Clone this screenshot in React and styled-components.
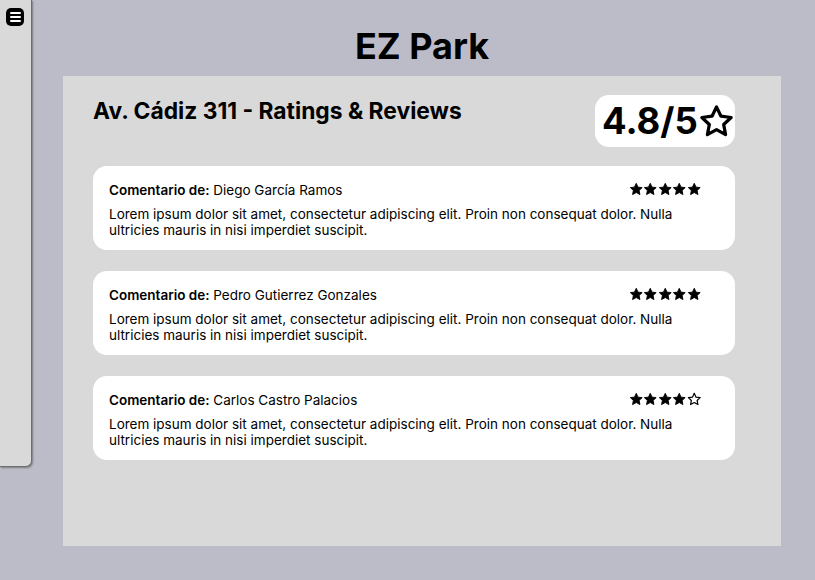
import React from "react";
import styled, { createGlobalStyle } from "styled-components";

const Global = createGlobalStyle`
  html, body { margin: 0; padding: 0; }
  body {
    background: #bcbcc8;
    font-family: Inter, "Noto Sans", sans-serif;
    color: #000;
  }
`;

const Page = styled.div`
  display: flex;
  width: 815px;
  height: 580px;
  overflow: hidden;
`;

const Sidebar = styled.aside`
  flex: 0 0 32px;
  height: 467px;
  background: #d9d9d9;
  border-right: 1px solid #6e6e6e;
  border-bottom: 1px solid #6e6e6e;
  border-bottom-right-radius: 6px;
  box-shadow: 1px 1px 2px rgba(0, 0, 0, 0.35);
  box-sizing: border-box;
  padding: 8px 0 0 6px;
`;

const MenuButton = styled.div`
  width: 18px;
  height: 18px;
  border-radius: 5px;
  background: #000;
  display: flex;
  flex-direction: column;
  align-items: center;
  justify-content: center;
  gap: 2px;
`;

const MenuLine = styled.span`
  display: block;
  width: 11px;
  height: 2px;
  border-radius: 1px;
  background: #fff;
`;

const Main = styled.main`
  flex: 1;
  display: flex;
  flex-direction: column;
  padding: 0 34px 0 31px;
`;

const Title = styled.h1`
  margin: 24px 0 8px;
  text-align: center;
  font-size: 36px;
  font-weight: 700;
  line-height: 44px;
`;

const Panel = styled.section`
  height: 470px;
  background: #d9d9d9;
  box-sizing: border-box;
  padding: 19px 46px 0 30px;
  display: flex;
  flex-direction: column;
`;

const Header = styled.div`
  display: flex;
  justify-content: space-between;
  align-items: flex-start;
`;

const Heading = styled.h2`
  margin: 2px 0 0;
  font-size: 22.8px;
  font-weight: 700;
  line-height: 28px;
`;

const RatingBox = styled.div`
  width: 140px;
  height: 52px;
  box-sizing: border-box;
  background: #fff;
  border-radius: 14px;
  display: flex;
  align-items: center;
  padding: 0 3px 0 7px;
  font-size: 36.5px;
  font-weight: 700;
  line-height: 1;
  svg { flex-shrink: 0; }
`;

const Cards = styled.div`
  margin-top: 19px;
  display: flex;
  flex-direction: column;
  gap: 21px;
`;

const Card = styled.article`
  background: #fff;
  border-radius: 14px;
  padding: 16px 16px 12px;
  font-size: 13.5px;
  line-height: 16px;
`;

const CardHead = styled.div`
  display: flex;
  justify-content: space-between;
  align-items: center;
  padding-right: 18px;
  margin-bottom: 8px;
`;

const Author = styled.div`
  font-weight: 400;
  b { font-weight: 600; }
`;

const Stars = styled.div`
  display: flex;
  gap: 0;
  margin-top: -1px;
`;

const Body = styled.p`
  margin: 0;
`;

const StarIcon = ({ filled, size = 14.5 }) => (
  <svg width={size} height={size} viewBox="0 0 24 24">
    <path
      d="M12 2.2l2.95 6.3 6.85.8-5.05 4.72 1.33 6.78L12 17.4l-6.08 3.4 1.33-6.78L2.2 9.3l6.85-.8z"
      fill={filled ? "#000" : "#fff"}
      stroke="#000"
      strokeWidth={filled ? 1.5 : 2}
      strokeLinejoin="round"
    />
  </svg>
);

const BigStar = () => (
  <svg width="37" height="37" viewBox="0 0 24 24">
    <path
      d="M12 2.5l2.9 6.05 6.6.85-4.85 4.55 1.25 6.55L12 17.3l-5.9 3.2 1.25-6.55L2.5 9.4l6.6-.85z"
      fill="none"
      stroke="#000"
      strokeWidth="2.1"
      strokeLinejoin="round"
    />
  </svg>
);

const lorem =
  "Lorem ipsum dolor sit amet, consectetur adipiscing elit. Proin non consequat dolor. Nulla ultricies mauris in nisi imperdiet suscipit.";

const reviews = [
  { name: "Diego García Ramos", stars: 5 },
  { name: "Pedro Gutierrez Gonzales", stars: 5 },
  { name: "Carlos Castro Palacios", stars: 4 },
];

export default function App() {
  return (
    <>
      <Global />
      <Page>
        <Sidebar>
          <MenuButton>
            <MenuLine />
            <MenuLine />
            <MenuLine />
          </MenuButton>
        </Sidebar>
        <Main>
          <Title>EZ Park</Title>
          <Panel>
            <Header>
              <Heading>Av. Cádiz 311 - Ratings &amp; Reviews</Heading>
              <RatingBox>
                <span>4.8/5</span>
                <BigStar />
              </RatingBox>
            </Header>
            <Cards>
              {reviews.map((r) => (
                <Card key={r.name}>
                  <CardHead>
                    <Author>
                      <b>Comentario de:</b> {r.name}
                    </Author>
                    <Stars>
                      {[0, 1, 2, 3, 4].map((i) => (
                        <StarIcon key={i} filled={i < r.stars} />
                      ))}
                    </Stars>
                  </CardHead>
                  <Body>{lorem}</Body>
                </Card>
              ))}
            </Cards>
          </Panel>
        </Main>
      </Page>
    </>
  );
}
